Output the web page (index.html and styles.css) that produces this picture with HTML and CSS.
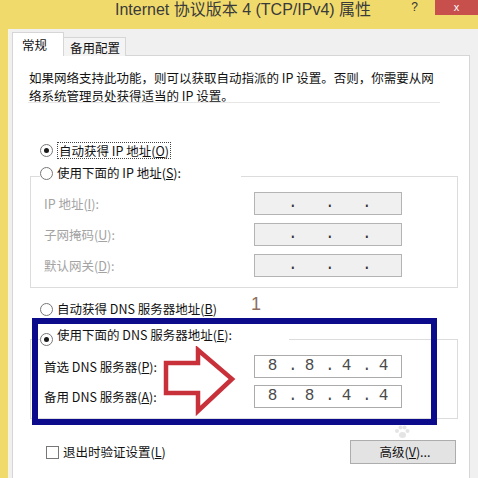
FILE: index.html
```html
<!doctype html>
<html lang="zh-CN">
<head>
    <meta charset="utf-8">
    <title>Internet 协议版本 4 (TCP/IPv4) 属性</title>
    <link rel="stylesheet" href="styles.css">
</head>
<body>
<div class="window">
    <div class="titlebar">
        <span class="title">Internet 协议版本 4 (TCP/IPv4) 属性</span>
        <span class="help">?</span>
        <span class="close">x</span>
    </div>
    <div class="client">
        <div class="tabs">
            <span class="tab active">常规</span>
            <span class="tab">备用配置</span>
        </div>
        <div class="panel">
            <p class="desc">如果网络支持此功能，则可以获取自动指派的 IP 设置。否则，你需要从网<br>络系统管理员处获得适当的 IP 设置。</p>
            <div class="sep"></div>

            <label class="option first"><span class="radio checked"></span><span class="focus">自动获得 IP 地址(<u>O</u>)</span></label>

            <fieldset class="group ip-group">
                <legend><span class="radio"></span>使用下面的 IP 地址(<u>S</u>):</legend>
                <div class="row"><span class="lbl off">IP 地址(<u>I</u>):</span><span class="ip off"><i></i><b>.</b><i></i><b>.</b><i></i><b>.</b><i></i></span></div>
                <div class="row"><span class="lbl off">子网掩码(<u>U</u>):</span><span class="ip off"><i></i><b>.</b><i></i><b>.</b><i></i><b>.</b><i></i></span></div>
                <div class="row"><span class="lbl off">默认网关(<u>D</u>):</span><span class="ip off"><i></i><b>.</b><i></i><b>.</b><i></i><b>.</b><i></i></span></div>
            </fieldset>

            <label class="option dns-auto"><span class="radio"></span>自动获得 DNS 服务器地址(<u>B</u>)</label>

            <fieldset class="group dns-group">
                <legend><span class="radio checked"></span>使用下面的 DNS 服务器地址(<u>E</u>):</legend>
                <div class="row"><span class="lbl">首选 DNS 服务器(<u>P</u>):</span><span class="ip"><i>8</i><b>.</b><i>8</i><b>.</b><i>4</i><b>.</b><i>4</i></span></div>
                <div class="row"><span class="lbl">备用 DNS 服务器(<u>A</u>):</span><span class="ip"><i>8</i><b>.</b><i>8</i><b>.</b><i>4</i><b>.</b><i>4</i></span></div>
            </fieldset>

            <div class="footer">
                <label class="option"><span class="check"></span>退出时验证设置(<u>L</u>)</label>
                <span class="button">高级(<u>V</u>)...</span>
            </div>

            <!-- annotations drawn over the screenshot -->
            <div class="mark-box"></div>
            <span class="mark-num">1</span>
            <svg class="mark-arrow" width="76" height="70" viewBox="0 0 76 70">
                <polygon points="3,17 35,17 35,4 69,33 35,65 35,47 3,47" fill="none" stroke="#c8303a" stroke-width="4.5" stroke-linejoin="miter"/>
            </svg>
            <svg class="paw" width="16" height="14" viewBox="0 0 16 14">
                <circle cx="3" cy="6" r="2" fill="#e4e4e4"/>
                <circle cx="6.5" cy="2.5" r="2" fill="#e4e4e4"/>
                <circle cx="10.5" cy="2.5" r="2" fill="#e4e4e4"/>
                <circle cx="13.5" cy="6" r="2" fill="#e4e4e4"/>
                <ellipse cx="8.5" cy="10" rx="3.5" ry="3" fill="#e4e4e4"/>
            </svg>
        </div>
    </div>
</div>
</body>
</html>
```

FILE: styles.css
```css
* { box-sizing: border-box; }
body {
    margin: 0;
    font-family: "Noto Sans CJK SC", "Noto Sans", sans-serif;
    font-size: 12.5px;
    color: #111;
}
.window {
    width: 478px; height: 478px;
    overflow: hidden;
    background: #f1da6c;
}

/* title bar */
.titlebar {
    height: 29px;
    display: flex;
    align-items: flex-start;
    white-space: nowrap;
}
.title {
    flex: none;
    margin-left: 115px;
    font-family: "Liberation Sans", "Noto Sans CJK SC", sans-serif;
    font-size: 16px;
    line-height: 19px;
    color: #3a3a3a;
}
.help {
    flex: none;
    margin-left: auto;
    font-family: "Liberation Sans", sans-serif;
    font-size: 12px; line-height: 14px;
    color: #333;
}
.close {
    flex: none;
    margin-left: 17px;
    width: 43px; height: 15px;
    background: #c74f4c;
    color: #fff;
    font-family: "Liberation Sans", sans-serif;
    font-size: 11px; line-height: 14px;
    text-align: center;
}

/* client area */
.client {
    margin-left: 8px;
    height: 449px;
    background: #f0f0f0;
    border-left: 1px solid #f7f3dc;
    padding: 3px 0 0 3px;
}
.tabs {
    display: flex;
    align-items: flex-end;
    height: 24px;
    position: relative;
    z-index: 1;
    margin-bottom: -1px;
}
.tab {
    height: 19px;
    padding: 0 5px 0 6px;
    border: 1px solid #d6d6d6;
    border-bottom: none;
    background: #f4f4f4;
    line-height: 19px;
}
.tab.active {
    width: 52px; height: 24px;
    padding-left: 9px;
    background: #fff;
    line-height: 24px;
    margin-right: -1px;
}
.panel {
    position: relative;
    width: 458px; height: 430px;
    background: #fff;
    border: 1px solid #d6d6d6;
    padding: 0 0 0 16px;
}
.desc {
    margin: 13px 0 0;
    line-height: 18px;
    white-space: nowrap;
}
.sep {
    margin: -3px 0 0 -1px;
    width: 412px; height: 1px;
    background: #e6e6e6;
}

/* radios and checkboxes */
.option {
    display: flex;
    align-items: center;
    height: 16px;
    line-height: 16px;
}
.option.first { margin: 39px 0 0 11px; }
.option.dns-auto { margin: 13px 0 0 11px; }
.radio, .check {
    width: 13px; height: 13px;
    margin-right: 4px;
    border: 1px solid #777;
    background: #fff;
    flex: none;
}
.radio { border-radius: 50%; display: inline-flex; align-items: center; justify-content: center; vertical-align: -2px; }
.radio.checked::after {
    content: "";
    width: 5px; height: 5px;
    border-radius: 50%;
    background: #1a1a1a;
}
.focus {
    border: 1px dotted #444;
    padding: 0 1px;
    line-height: 15px;
}

/* group boxes */
.group {
    margin: 7px 0 0 1px;
    padding: 0 0 10px;
    width: 428px;
    border: 1px solid #dcdcdc;
}
.group legend {
    margin-left: 9px;
    padding: 0 60px 6px 0;
    line-height: 16px;
}
.dns-group { margin-top: 10px; }
.dns-group legend { padding-right: 57px; }
.row {
    display: flex;
    align-items: center;
    height: 23px;
    margin-top: 8px;
    padding-left: 13px;
}
.ip-group .row:first-of-type { margin-top: 5px; }
.dns-group .row { margin-top: 7px; }
.dns-group .row:first-of-type { margin-top: 3px; }
.lbl { width: 210px; }
.lbl.off { color: #a3a3a3; }
.ip {
    display: flex;
    width: 148px; height: 23px;
    padding: 0 2px;
    border: 1px solid #ababab;
    background: #fff;
    font-family: "Liberation Mono", monospace;
    font-size: 16px;
    line-height: 21px;
    color: #4a4a4a;
}
.ip.off { background: #f0f0f0; border-color: #b4b4b4; color: #333; }
.ip i { width: 31px; font-style: normal; text-align: center; }
.ip b { width: 6px; font-weight: normal; text-align: center; }

/* bottom row */
.footer {
    display: flex;
    justify-content: space-between;
    align-items: center;
    width: 410px;
    margin: 21px 0 0 17px;
}
.footer .option { height: 24px; }
.button {
    width: 106px; height: 24px;
    border: 1px solid #adadad;
    background: #e3e3e3;
    text-align: center;
    line-height: 22px;
    padding-left: 4px;
}

/* annotations */
.mark-box {
    position: absolute;
    left: 19px; top: 262px;
    width: 405px; height: 107px;
    border: 6px solid #0b0b8c;
}
.mark-num {
    position: absolute;
    left: 238px; top: 238px;
    font-family: "Liberation Sans", sans-serif;
    font-size: 18px;
    color: #8e6f5e;
}
.mark-arrow {
    position: absolute;
    left: 150px; top: 290px;
}
.paw {
    position: absolute;
    left: 381px; top: 369px;
}
```
